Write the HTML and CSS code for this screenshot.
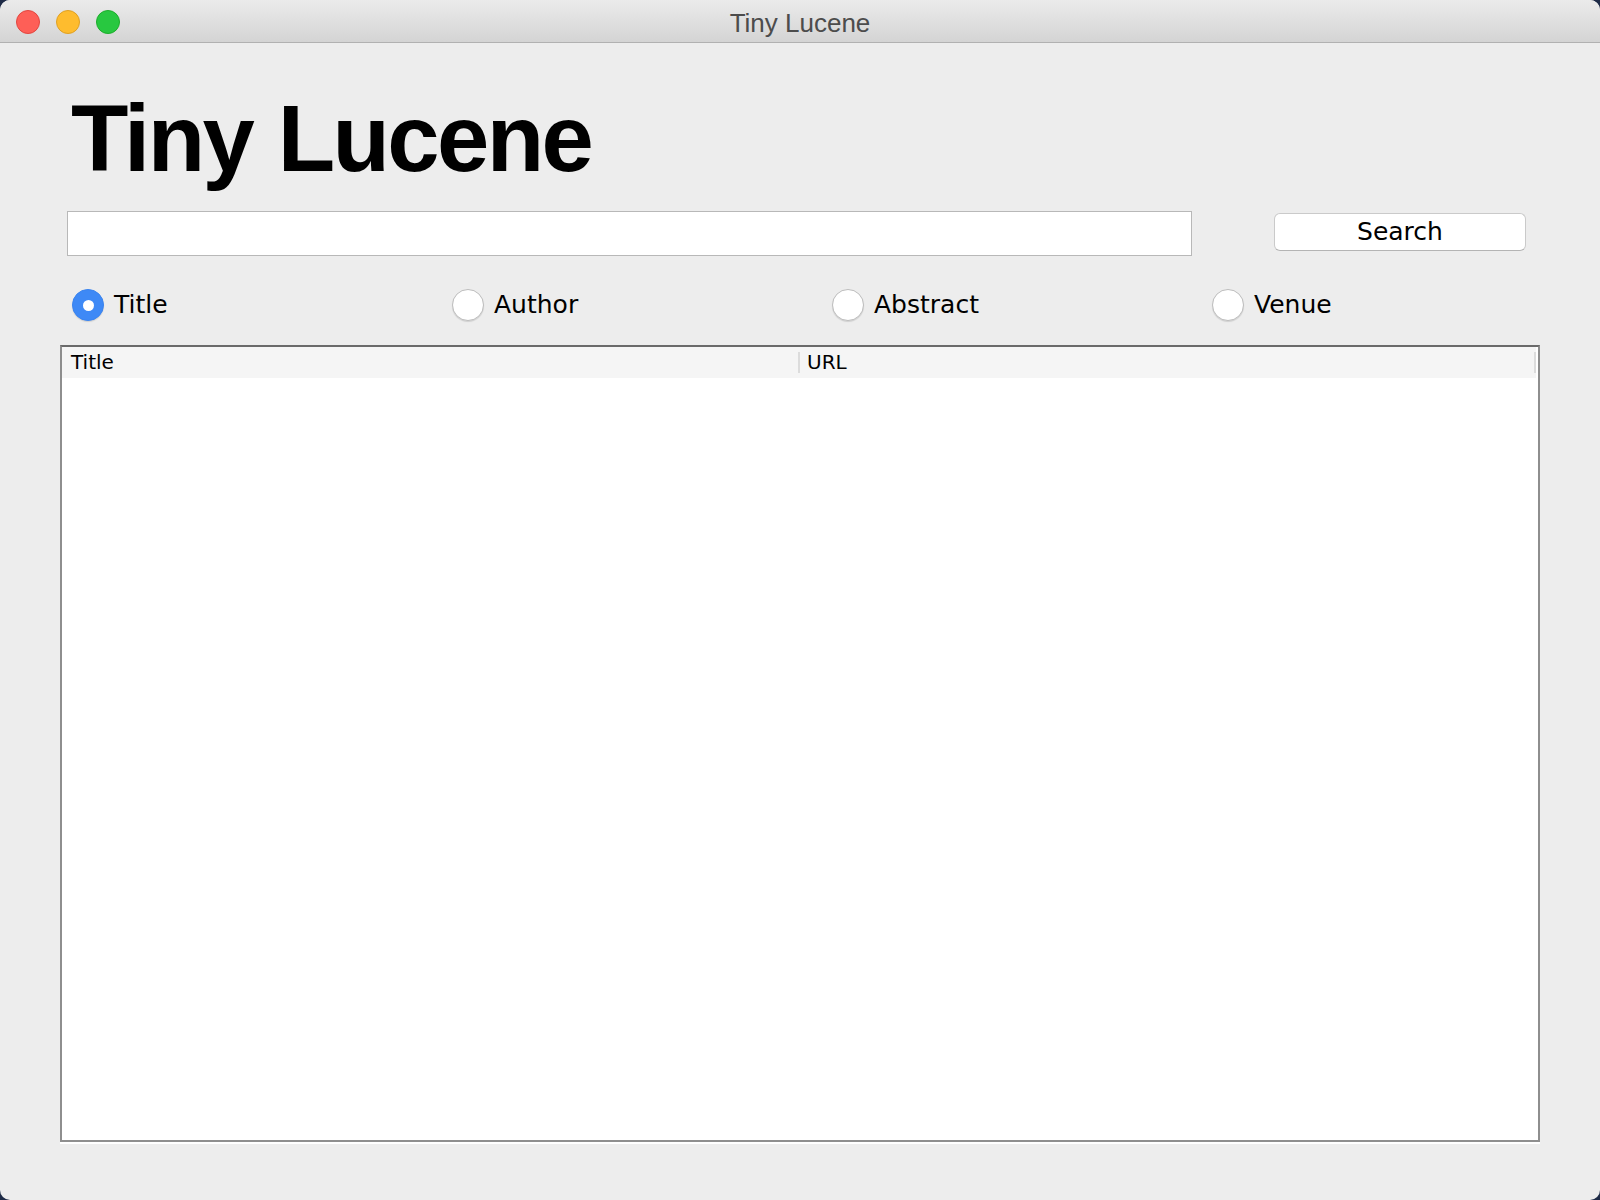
FILE: index.html
```html
<!DOCTYPE html>
<html>
<head>
<meta charset="utf-8">
<title>Tiny Lucene</title>
<link rel="stylesheet" href="styles.css">
</head>
<body>
<div class="window">
  <div class="titlebar">
    <div class="lights">
      <span class="light red"></span>
      <span class="light yellow"></span>
      <span class="light green"></span>
    </div>
    <div class="wintitle">Tiny Lucene</div>
    <div></div>
  </div>
  <div class="main">
    <h1 class="heading">Tiny Lucene</h1>
    <div class="search-row">
      <div class="field"></div>
      <div class="button">Search</div>
    </div>
    <div class="radios">
      <label class="radio"><span class="dot checked"></span><span>Title</span></label>
      <label class="radio"><span class="dot"></span><span>Author</span></label>
      <label class="radio"><span class="dot"></span><span>Abstract</span></label>
      <label class="radio"><span class="dot"></span><span>Venue</span></label>
    </div>
    <div class="table">
      <div class="thead">
        <div class="th">Title</div>
        <div class="th th-url">URL</div>
      </div>
      <div class="tbody"></div>
    </div>
  </div>
</div>
</body>
</html>
```
FILE: styles.css
```css
html, body {
  margin: 0;
  padding: 0;
  background: #1e2b47;
}
.window {
  width: 1600px;
  height: 1200px;
  background: #ededed;
  border-radius: 10px;
  overflow: hidden;
  display: flex;
  flex-direction: column;
}
.titlebar {
  height: 42px;
  flex: none;
  border-bottom: 1px solid #b1b1b1;
  background: linear-gradient(#ebebeb, #d4d4d4);
  display: grid;
  grid-template-columns: 1fr auto 1fr;
  align-items: center;
}
.lights {
  display: flex;
  gap: 16px;
  padding-left: 16px;
  padding-top: 1px;
}
.light {
  width: 22px;
  height: 22px;
  border-radius: 50%;
  display: block;
}
.red { background: #fe5f57; border: 1px solid #e2463f; }
.yellow { background: #febc2e; border: 1px solid #dfa023; }
.green { background: #28c840; border: 1px solid #1dad2b; }
.wintitle {
  font-family: "Liberation Sans", Arial, sans-serif;
  font-size: 26px;
  color: #4c4c4c;
  line-height: 38px;
  padding-top: 4px;
}
.main {
  padding: 49px 60px 0 60px;
  font-family: "DejaVu Sans", sans-serif;
  color: #000;
}
.heading {
  margin: 0 0 25px 11px;
  font-family: "Liberation Sans", Arial, sans-serif;
  font-weight: bold;
  font-size: 94px;
  line-height: 94px;
  letter-spacing: -2.6px;
  word-spacing: 2px;
}
.search-row {
  display: flex;
  align-items: flex-start;
  margin-left: 7px;
}
.field {
  width: 1125px;
  height: 45px;
  box-sizing: border-box;
  background: #fff;
  border: 1px solid #b8b8b8;
}
.button {
  margin: 2px 0 0 82px;
  width: 252px;
  height: 38px;
  box-sizing: border-box;
  background: #fff;
  border: 1px solid #cacaca;
  border-bottom-color: #b4b4b4;
  border-radius: 6px;
  font-size: 25px;
  line-height: 36px;
  text-align: center;
}
.radios {
  margin: 33px 0 0 12px;
  display: grid;
  grid-template-columns: repeat(4, 380px);
}
.radio {
  display: flex;
  align-items: center;
  gap: 10px;
  height: 32px;
  font-size: 25px;
  line-height: 32px;
}
.dot {
  width: 32px;
  height: 32px;
  box-sizing: border-box;
  border-radius: 50%;
  background: #fff;
  border: 1px solid #bdbdbd;
  box-shadow: 0 1px 1px rgba(0,0,0,0.12);
  display: flex;
  align-items: center;
  justify-content: center;
}
.dot.checked {
  background: #3e89f6;
  border-color: #3a84f0;
}
.dot.checked::after {
  content: "";
  width: 11px;
  height: 11px;
  border-radius: 50%;
  background: #fff;
}
.table {
  margin-top: 24px;
  width: 1480px;
  height: 797px;
  box-sizing: border-box;
  background: #fff;
  border: 2px solid #8e8e8e;
  border-top-color: #6a6a6a;
  box-shadow: 0 2px 0 #fff;
  display: flex;
  flex-direction: column;
}
.thead {
  height: 31px;
  background: #f5f5f5;
  display: grid;
  grid-template-columns: 738px 736px;
  margin-right: 2px;
}
.th {
  font-size: 20px;
  line-height: 31px;
  padding-left: 9px;
  position: relative;
}
.th-url {
  padding-left: 7px;
}
.th::after {
  content: "";
  position: absolute;
  right: 0;
  top: 5px;
  bottom: 5px;
  width: 2px;
  background: #dcdcdc;
}
.tbody {
  flex: 1;
}
```
